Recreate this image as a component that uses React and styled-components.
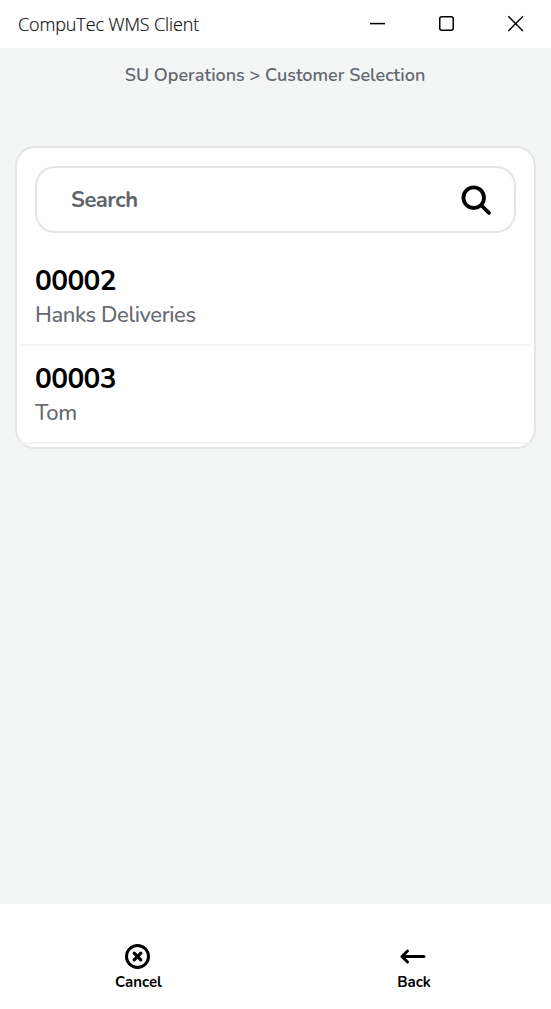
import React from "react";
import styled, { createGlobalStyle } from "styled-components";

const GlobalStyle = createGlobalStyle`
  * { box-sizing: border-box; }
  body { margin: 0; background: #f4f6f6; }
`;

const Window = styled.div`
  display: flex;
  flex-direction: column;
  height: 1009px;
  background: #f4f6f6;
  font-family: Nunito, Lato, sans-serif;
  color: #000;
`;

const TitleBar = styled.header`
  display: flex;
  align-items: center;
  justify-content: space-between;
  height: 48px;
  padding: 0 26px 0 18px;
  background: #fff;
`;

const WindowTitle = styled.div`
  font: 300 18px/24px "Segoe UI", "Open Sans", sans-serif;
  letter-spacing: -0.12px;
  -webkit-text-stroke: 0.2px #111;
  color: #111;
  white-space: nowrap;
`;

const WindowControls = styled.div`
  display: flex;
  gap: 51px;
`;

const ControlButton = styled.button`
  display: flex;
  padding: 0;
  border: 0;
  background: none;
`;

const Breadcrumb = styled.div`
  height: 98px;
  padding: 15px 1px 0 0;
  text-align: center;
  font-size: 18px;
  font-weight: 600;
  line-height: 24px;
  color: #63676f;
  white-space: nowrap;
`;

const Card = styled.main`
  margin: 0 15px;
  height: 303px;
  border: 2px solid #e4e5e5;
  border-radius: 20px;
  background: #fff;
  padding: 18px 3px 0;
`;

const SearchBox = styled.div`
  display: flex;
  align-items: center;
  justify-content: space-between;
  height: 67px;
  margin: 0 15px 15px;
  padding: 0 22px 0 34px;
  border: 2px solid #e4e5e5;
  border-radius: 20px;
`;

const SearchLabel = styled.span`
  font-size: 22px;
  font-weight: 700;
  line-height: 30px;
  letter-spacing: -0.5px;
  color: #5f646b;
`;

const Item = styled.div`
  height: 98px;
  padding: 14px 15px 0;
  border-bottom: 2px solid #f4f5f5;
`;

const ItemCode = styled.div`
  font-size: 28px;
  font-weight: 700;
  line-height: 38px;
  letter-spacing: -0.6px;
`;

const ItemName = styled.div`
  font-size: 22px;
  font-weight: 500;
  line-height: 30px;
  letter-spacing: -0.4px;
  color: #656a72;
`;

const Footer = styled.footer`
  display: flex;
  height: 105px;
  margin-top: auto;
  padding-top: 39px;
  background: #fff;
`;

const Action = styled.button`
  display: flex;
  flex-direction: column;
  align-items: center;
  width: 276px;
  padding: 0;
  border: 0;
  background: none;
  color: #000;
  font-family: inherit;
  font-size: 15px;
  font-weight: 700;
  line-height: 20px;
  svg { margin-bottom: 2px; }
`;

const ActionLabel = styled.span`
  padding-left: 1.5px;
`;

const customers = [
  { code: "00002", name: "Hanks Deliveries" },
  { code: "00003", name: "Tom" },
];

export default function App() {
  return (
    <Window>
      <GlobalStyle />
      <TitleBar>
        <WindowTitle>CompuTec WMS Client</WindowTitle>
        <WindowControls>
          <ControlButton aria-label="Minimize">
            <svg width="18" height="18" fill="none" stroke="#000" strokeWidth="1.5">
              <path d="M1 8.6H16" />
            </svg>
          </ControlButton>
          <ControlButton aria-label="Maximize">
            <svg width="18" height="18" fill="none" stroke="#000" strokeWidth="1.5">
              <rect x="1.75" y="1.75" width="13.5" height="13.5" rx="2" />
            </svg>
          </ControlButton>
          <ControlButton aria-label="Close">
            <svg width="18" height="18" fill="none" stroke="#000" strokeWidth="1.4">
              <path d="M1.3 1.3 16 16M16 1.3 1.3 16" />
            </svg>
          </ControlButton>
        </WindowControls>
      </TitleBar>
      <Breadcrumb>SU Operations &gt; Customer Selection</Breadcrumb>
      <Card>
        <SearchBox>
          <SearchLabel>Search</SearchLabel>
          <svg width="32" height="32" fill="none" stroke="#000" strokeLinecap="round">
            <circle cx="13.7" cy="13.7" r="10.3" strokeWidth="3.8" />
            <path d="M21.5 21.5 29 29" strokeWidth="3.8" />
          </svg>
        </SearchBox>
        {customers.map((c) => (
          <Item key={c.code}>
            <ItemCode>{c.code}</ItemCode>
            <ItemName>{c.name}</ItemName>
          </Item>
        ))}
      </Card>
      <Footer>
        <Action>
          <svg width="28" height="27" fill="none" stroke="#000" strokeLinecap="round">
            <circle cx="13.5" cy="13.5" r="11" strokeWidth="3" />
            <path d="m10.2 10.2 6.6 6.6m0-6.6-6.6 6.6" strokeWidth="3.2" />
          </svg>
          <ActionLabel>Cancel</ActionLabel>
        </Action>
        <Action>
          <svg width="28" height="27" fill="none" stroke="#000" strokeWidth="3" strokeLinecap="round" strokeLinejoin="round">
            <path d="M25 13.5H3M8.5 8 3 13.5 8.5 19" />
          </svg>
          <ActionLabel>Back</ActionLabel>
        </Action>
      </Footer>
    </Window>
  );
}
